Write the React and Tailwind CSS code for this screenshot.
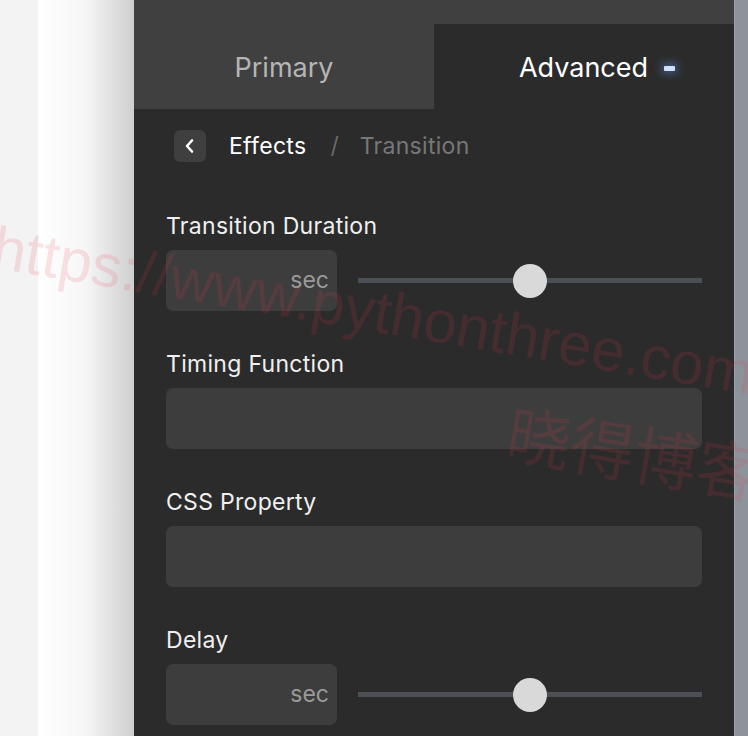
import React from 'react';

function Field({ label, children }) {
  return (
    <div className="flex flex-col">
      <div className="h-[28px] leading-[28px] text-[23px] text-[#f0f0f0] tracking-[0.3px]">{label}</div>
      <div className="mt-[10px]">{children}</div>
    </div>
  );
}

function SecInput() {
  return (
    <div className="flex items-center gap-[21px]">
      <div className="w-[171px] h-[61px] rounded-[7px] bg-[#3d3d3d] flex items-center justify-end pr-[8px] text-[23px] text-[#9a9a9a]">
        sec
      </div>
      <div className="relative flex-1 h-[34px] flex items-center">
        <div className="w-full h-[5px] bg-[#4b5057]" />
        {/* thumb */}
        <div className="absolute left-[155px] top-0 w-[34px] h-[34px] rounded-full bg-[#d9d9d9]" />
      </div>
    </div>
  );
}

function TextInput() {
  return <div className="h-[61px] rounded-[7px] bg-[#3d3d3d]" />;
}

export default function App() {
  return (
    <div className="relative w-[748px] h-[736px] overflow-hidden flex bg-[#f3f3f3] font-['Inter',sans-serif]">
      <div className="w-[38px] shrink-0" />
      <div className="w-[96px] shrink-0 bg-gradient-to-r from-white via-[#f6f6f6] to-[#cfcfcf]" />

      {/* panel */}
      <div className="w-[600px] shrink-0 bg-[#2b2b2b] flex flex-col">
        <div className="flex h-[109px] bg-[#404040]">
          <div className="w-[300px] flex items-center justify-center pt-[28px] text-[27px] text-[#b5b5b5]">
            Primary
          </div>
          <div className="flex-1 mt-[24px] pt-[4px] bg-[#2b2b2b] flex items-center justify-center text-[27px] text-white">
            <span className="ml-[26px]">Advanced</span>
            <span className="ml-[16px] w-[11px] h-[5px] rounded-[1px] bg-[#cfe0fb] shadow-[0_0_8px_3px_rgba(90,140,220,0.45)]" />
          </div>
        </div>

        {/* breadcrumb */}
        <div className="flex items-center h-[32px] mt-[21px] ml-[40px]">
          <button className="w-[32px] h-[32px] rounded-[6px] bg-[#3f3f3f] flex items-center justify-center">
            <svg width="16" height="16" viewBox="0 0 16 16" fill="none" stroke="white" strokeWidth="2.6" strokeLinecap="round" strokeLinejoin="round">
              <path d="M10 2.5 5 8l5 5.5" />
            </svg>
          </button>
          <span className="ml-[23px] text-[23px] tracking-[0.3px] text-white">Effects</span>
          <span className="ml-[24px] text-[23px] text-[#6a6a6a]">/</span>
          <span className="ml-[21px] text-[23px] tracking-[0.3px] text-[#777777]">Transition</span>
        </div>

        <div className="flex flex-col gap-[39px] mt-[50px] pl-[32px] pr-[32px]">
          <Field label="Transition Duration"><SecInput /></Field>
          <Field label="Timing Function"><TextInput /></Field>
          <Field label="CSS Property"><TextInput /></Field>
          <Field label="Delay"><SecInput /></Field>
        </div>
      </div>

      <div className="flex-1 bg-[#8c939b] border-l border-[#9aa1a8]" />

      {/* watermark */}
      <div className="pointer-events-none absolute left-0 top-[196px] w-[1000px] origin-top-left rotate-[9.5deg] font-['Liberation_Sans',sans-serif] text-[rgba(230,60,80,0.14)]">
        <div className="text-[60px] leading-[64px] ml-[2px] mt-[20px] whitespace-nowrap">https://www.pythonthree.com</div>
        <div className="text-[64px] leading-[72px] ml-[540px] mt-[26px] whitespace-nowrap font-['Noto_Sans_CJK_SC',sans-serif]">晓得博客</div>
      </div>
    </div>
  );
}
